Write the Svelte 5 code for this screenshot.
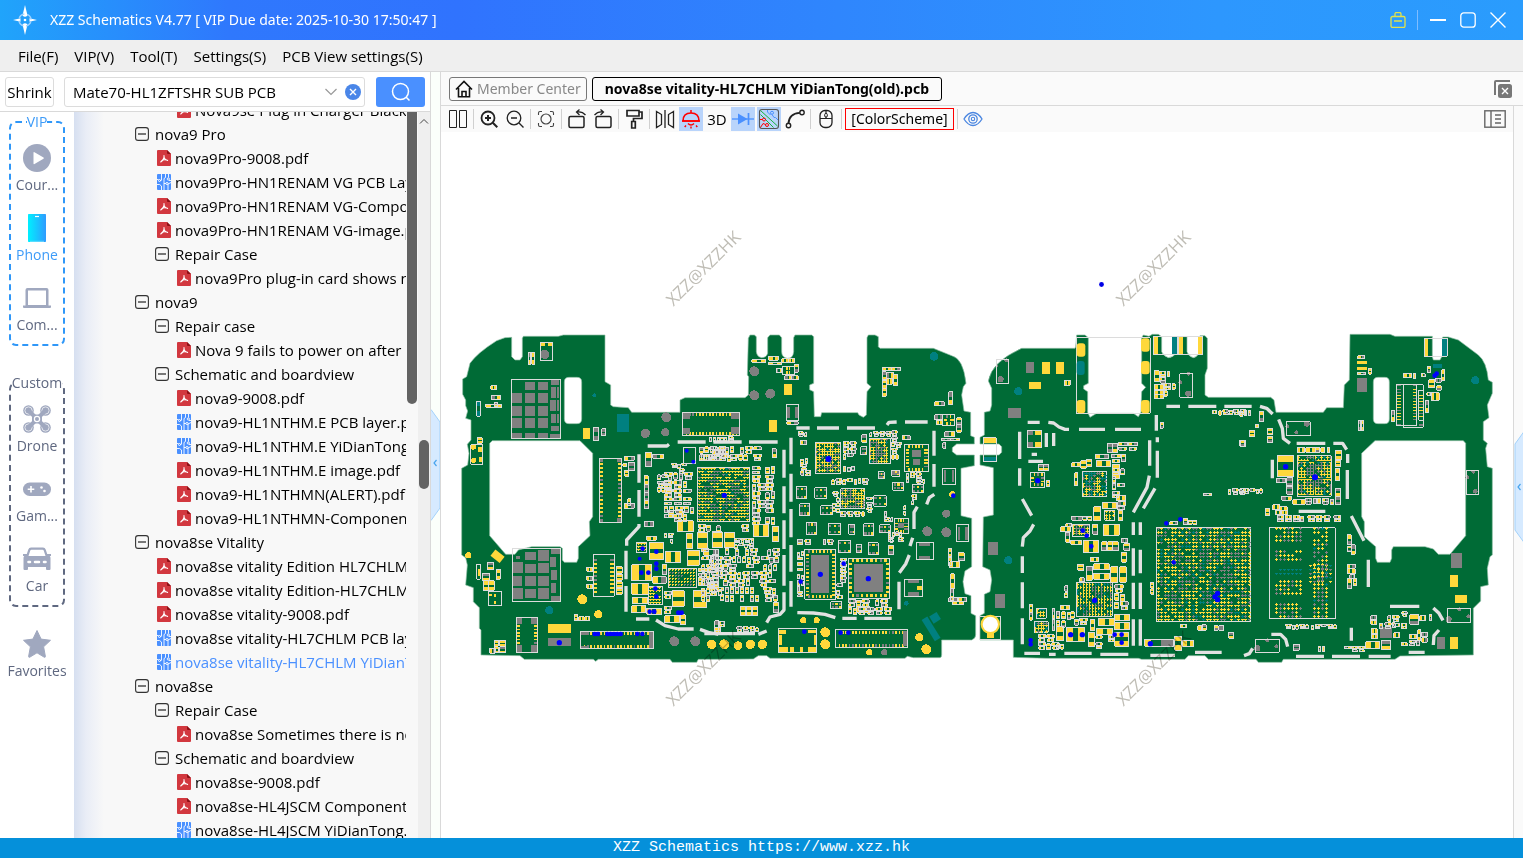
<script>
  const menus = ['File(F)', 'VIP(V)', 'Tool(T)', 'Settings(S)', 'PCB View settings(S)'];

  const railGroups = [
    { title: 'VIP', tone: 'vip', items: [['play', 'Cour...'], ['phone', 'Phone'], ['laptop', 'Com...']] },
    { title: 'Custom', tone: 'custom', items: [['drone', 'Drone'], ['game', 'Gam...'], ['car', 'Car']] }
  ];

  // [depth, kind, label]
  const rows = [
    [2, 'pdf', 'Nova9se Plug in Charger Black Screen'],
    [0, 'dir', 'nova9 Pro'],
    [1, 'pdf', 'nova9Pro-9008.pdf'],
    [1, 'pcb', 'nova9Pro-HN1RENAM VG PCB Layer.pcb'],
    [1, 'pdf', 'nova9Pro-HN1RENAM VG-Component.pdf'],
    [1, 'pdf', 'nova9Pro-HN1RENAM VG-image.pdf'],
    [1, 'dir', 'Repair Case'],
    [2, 'pdf', 'nova9Pro plug-in card shows no service'],
    [0, 'dir', 'nova9'],
    [1, 'dir', 'Repair case'],
    [2, 'pdf', 'Nova 9 fails to power on after hit'],
    [1, 'dir', 'Schematic and boardview'],
    [2, 'pdf', 'nova9-9008.pdf'],
    [2, 'pcb', 'nova9-HL1NTHM.E PCB layer.pcb'],
    [2, 'pcb', 'nova9-HL1NTHM.E YiDianTong.pcb'],
    [2, 'pdf', 'nova9-HL1NTHM.E image.pdf'],
    [2, 'pdf', 'nova9-HL1NTHMN(ALERT).pdf'],
    [2, 'pdf', 'nova9-HL1NTHMN-Component.pdf'],
    [0, 'dir', 'nova8se Vitality'],
    [1, 'pdf', 'nova8se vitality Edition HL7CHLM (old)'],
    [1, 'pdf', 'nova8se vitality Edition-HL7CHLM-image'],
    [1, 'pdf', 'nova8se vitality-9008.pdf'],
    [1, 'pcb', 'nova8se vitality-HL7CHLM PCB layer.pcb'],
    [1, 'pcb', 'nova8se vitality-HL7CHLM YiDianTong(old).pcb', true],
    [0, 'dir', 'nova8se'],
    [1, 'dir', 'Repair Case'],
    [2, 'pdf', 'nova8se Sometimes there is no'],
    [1, 'dir', 'Schematic and boardview'],
    [2, 'pdf', 'nova8se-9008.pdf'],
    [2, 'pdf', 'nova8se-HL4JSCM Component'],
    [2, 'pcb', 'nova8se-HL4JSCM YiDianTong.pcb']
  ];

  const tools = [
    ['columns', 'Split view'], null, ['zoomin', 'Zoom in'], ['zoomout', 'Zoom out'], null, ['fit', 'Fit'], null,
    ['rotl', 'Rotate left'], ['rotr', 'Rotate right'], null, ['roller', 'Paint'], null, ['mirror', 'Mirror'],
    ['lamp', 'Light', true], ['3d', '3D'], ['diode', 'Diode', true], ['net', 'Nets', true], ['curve', 'Curve'], null,
    ['mouse', 'Mouse'], null
  ];

  // ---- board drawing, in thirds of a pixel ----
  let seed = 7;
  const rnd = () => ((seed = (seed * 1103515245 + 12345) % 2147483648) / 2147483648);
  const P = { y: '', g: '', t: '', w: '', b: '', sy: '', sg: '', st: '', wall: '' };
  const nums = (s) => s.trim().split(/\s*;\s*/).filter(Boolean).map((r) => r.trim().split(/\s+/).map(Number));
  const rect = (c, x, y, w, h) => { P[c] += `M${x} ${y}h${w}v${h}h${-w}z`; };
  const disc = (c, x, y, r) => { P[c] += `M${x - r} ${y}a${r} ${r} 0 1 0 ${2 * r} 0a${r} ${r} 0 1 0 ${-2 * r} 0z`; };
  function chip(x, y, w, h, big) {
    rect('w', x, y, w, h);
    const a = rnd() < 0.3 && !big ? 'g' : 'y';
    const b = rnd() < 0.35 && !big ? 'g' : 'y';
    if (w > h) {
      const p = Math.round(w * 0.34);
      rect(a, x + 1, y + 1, p, h - 2); rect(b, x + w - 1 - p, y + 1, p, h - 2);
    } else {
      const p = Math.round(h * 0.34);
      rect(a, x + 1, y + 1, w - 2, p); rect(b, x + 1, y + h - 1 - p, w - 2, p);
    }
  }
  function clutter(x, y, w, h, keep = 0.8, s = 1) {
    for (let cy = y; cy + 12 * s <= y + h; cy += 23 * s) {
      let cx = x;
      while (cx + 10 * s <= x + w) {
        const wide = rnd() < 0.5;
        const cw = wide ? 24 * s : 13 * s;
        if (rnd() < keep && cx + cw <= x + w + 4) {
          if (wide) { chip(cx, cy, 22 * s, 9 * s); if (rnd() < 0.8) chip(cx + 2, cy + 12 * s, 18 * s, 8 * s); }
          else chip(cx, cy + Math.floor(rnd() * 4), 10 * s, 18 * s);
        }
        cx += cw + 2;
      }
    }
  }
  // Ball grid: power and ground balls sit in loose patches
  function bga(x, y, w, h, step, pg, pt, frame = true) {
    if (frame) rect('w', x, y, w, h);
    for (let j = y + 5; j < y + h - 2; j += step)
      for (let i = x + 5; i < x + w - 2; i += step) {
        if (rnd() > 0.9) continue;
        const patch = 1 + 0.9 * Math.sin(i * 0.06 + 1) * Math.cos(j * 0.05);
        const edge = Math.min(i - x, x + w - i, j - y, y + h - j) < w * 0.22;
        const r = rnd();
        const g = Math.min(0.9, pg * patch * (edge ? 0.8 : 1.7));
        const t = pt * (edge ? 1.5 : 0.8);
        P[r < g ? 'sg' : r < g + t ? 'st' : 'sy'] += `M${i - 4} ${j}h8M${i} ${j - 4}v8`;
      }
  }
  function pads(x, y, w, h, step, sides = 'tblr') {
    rect('w', x, y, w, h);
    if (/[tb]/.test(sides)) for (let i = x + 10; i < x + w - 10; i += step) {
      if (sides.includes('t')) rect(rnd() < 0.15 ? 'g' : 'y', i, y + 3, step / 2, 9);
      if (sides.includes('b')) rect(rnd() < 0.15 ? 'g' : 'y', i, y + h - 12, step / 2, 9);
    }
    if (/[lr]/.test(sides)) for (let j = y + 14; j < y + h - 12; j += step) {
      if (sides.includes('l')) rect(rnd() < 0.2 ? 'g' : 'y', x + 2, j, 10, step / 2);
      if (sides.includes('r')) rect(rnd() < 0.2 ? 'g' : 'y', x + w - 12, j, 10, step / 2);
    }
  }

  const sections = [
    {
      o: 0,
      y: '384 309 22 33;279 897 69 26;258 53 11 9;280 53 11 9;68 366 14 15;72 396 8 15;68 732 7 20;102 806 8 8;118 806 6 10;118 828 6 10',
      g: '210 170 30 25;248 170 30 25;288 163 25 17;171 204 30 30;210 204 30 30;248 204 30 30;171 243 30 30;210 243 30 30;248 243 30 30;171 280 30 30;210 280 30 30;248 280 30 30;168 324 33 16;210 324 30 16;248 324 30 16;286 326 30 14;288 186 15 33;305 186 8 33;286 224 17 34;305 224 8 34;288 267 15 28;305 267 8 28;288 303 25 15;172 711 32 34;210 681 32 24;248 675 34 34;210 716 32 28;248 714 34 30;174 754 28 28;210 754 32 28;248 754 34 28;172 789 32 33;210 792 32 28;248 789 34 33;184 694 10 8;288 672 28 15;285 695 18 30;288 735 18 30;288 773 15 30;288 812 28 17;279 939 69 24;682 262 24 20;682 308 24 20;184 877 17 20;229 877 17 20;184 961 17 20;229 961 17 20;433 400 11 11;486 400 12 12;433 581 11 11;486 580 12 12;378 921 24 8;378 962 24 8;582 922 13 46',
      t: '487 267 35 54;67 229 9 15;67 258 9 15',
      box: '257 52 36 55;170 163 147 178;66 229 10 45;48 360 35 58;173 670 143 160;100 800 40 42;66 718 10 45;685 367 38 48',
      dy: '382 823 15;430 868 12;40 691 9;770 958 14;55 366 8;56 406 8',
      dg: '571 325 14;634 277 15;631 322 12;269 88 14;658 949 15;721 949 15',
      dt: '283 856 12;418 211 6',
      db: '695 377 6;715 410 6;563 671 7;554 701 6;604 680 7;604 716 7;604 731 7;559 743 7;580 743 7;601 791 7;604 815 7;584 860 7;598 860 7;670 863 7;680 863 7;419 927 7;429 927 7;457 927 7;467 927 7;477 927 7;487 927 7;497 927 7;547 927 7;562 927 7;313 953 8',
      pads: [[433, 400, 67, 193, 12, 'lr'], [415, 688, 63, 126, 12, 'lr'], [184, 877, 64, 106, 10, 'lr'], [376, 919, 220, 52, 10, 'tb'], [682, 262, 172, 70, 10, 'tb']],
      bga: [[728, 427, 156, 163, 9, 0.25, 0.05], [640, 730, 85, 57, 9, 0.3, 0], [545, 652, 30, 32, 9, 0, 0.1], [582, 784, 42, 56, 9, 0, 0]],
      big: '667 588 48 32;727 622 30 48;772 620 30 48;583 653 43 50;632 679 44 35;697 676 36 45;530 720 60 47;530 775 50 33;532 817 45 20;530 843 42 20;575 850 45 18;652 798 36 46;715 798 40 50',
      chips: '108 182 17 11;109 211 28 12;92 238 48 9;120 232 9 14;220 82 8 36;230 82 9 36;67 338 15 17;571 382 18 43;594 388 32 12;508 394 30 12;522 412 16 26;504 416 12 8;510 436 12 18;415 308 16 38;440 312 12 20;568 452 12 26;568 478 12 26;568 504 12 24;568 528 12 24;508 535 30 15;518 522 10 20;568 590 28 14;694 626 20 44;746 673 44 18;640 557 45 20;630 873 44 20;677 870 14 30;395 727 18 12;395 754 18 12;395 778 18 12;484 725 18 20;484 748 18 18;484 770 18 18;484 790 18 18;124 733 12 30;98 712 18 22;83 745 20 22;85 768 16 28;102 768 16 28;358 868 10 18;372 875 16 12;390 875 14 12;105 970 16 15;118 946 12 18;118 966 12 18;134 946 18 18;134 966 18 18;780 888 12 34;594 755 40 20;622 720 14 30;770 690 20 40;576 634 28 12',
      clutter: [[608, 450, 45, 60, 0.9, 0.8], [628, 442, 95, 140, 0.9, 1.1], [650, 415, 45, 30, 0.8, 0.7], [735, 365, 100, 55, 0.9], [730, 730, 80, 55, 0.9, 1.2], [628, 625, 30, 25, 0.8, 0.7], [764, 335, 80, 12, 1, 0.7], [730, 600, 80, 20, 0.8], [765, 700, 45, 120, 0.8], [628, 800, 20, 60, 0.8]],
      walls: '578 363 636 363 642 358;668 351 752 351;552 388 552 473;552 495 552 575;552 597 552 605 515 645 515 662;513 677 513 763;513 783 513 860;543 882 583 882;603 885 630 902 670 912 716 912;735 913 760 922 790 928'
    },
    {
      o: 780,
      y: '207 178 24 32;162 286 24 34;192 914 20 12;280 914 22 10;192 966 26 15;278 966 26 15;192 930 8 30;296 930 8 30;607 782 14 12;226 966 12 14;255 966 8 14',
      g: '288 690 54 113;417 717 87 84;592 375 26 22;594 402 21 18;48 263 26 20;48 306 26 22;217 245 8 34;240 245 8 34;686 436 8 34;710 436 8 34;728 605 8 40;751 605 8 40;612 654 34 10;612 692 34 10;580 765 32 8;580 802 32 10;549 594 18 14;564 919 12 45',
      t: '',
      box: '214 238 36 50;190 912 115 70;683 430 38 50;724 600 37 50;604 652 52 52;568 763 55 52',
      dy: '331 922 15;331 958 15;28 958 15;69 962 13;106 958 14;142 958 14;613 937 12;634 973 15;463 982 9;265 886 9;305 886 9;712 508 9',
      dg: '118 139 15;118 211 15;166 206 15;694 566 12;637 619 15;694 622 15;508 982 9',
      dt: '657 94 13;574 835 7',
      db: '28 511 8;340 402 9;316 748 8;460 761 8;386 716 7;257 770 7;715 512 7;268 920 7;377 923 7;400 923 7',
      pads: [[270, 673, 92, 150, 11, 'tblr'], [400, 700, 124, 120, 14, 'tblr'], [361, 915, 217, 53, 10, 'tb'], [570, 358, 70, 82, 10, 'tblr'], [538, 580, 42, 46, 8, 'tblr'], [684, 268, 34, 34, 10, 'tblr'], [204, 124, 34, 26, 8, 'tb']],
      bga: [[301, 352, 76, 94, 8, 0.25, 0.03], [463, 340, 63, 76, 8, 0.35, 0.04], [378, 492, 72, 60, 8, 0.4, 0]],
      big: '116 600 46 36;30 622 30 46;-8 622 30 46;-8 378 30 16;172 604 18 46;76 844 16 28;94 844 16 28;112 844 16 28;424 846 42 18',
      chips: '162 94 28 12;110 105 42 7;160 112 40 7;184 130 16 12;200 102 20 10;220 102 20 10;210 152 20 12;230 152 20 12;240 118 10 24;216 290 34 8;660 230 28 12;702 200 11 40;690 320 30 16;680 340 26 7;708 340 26 7;726 278 13 22;726 300 13 22;660 270 22 14;664 286 20 14;684 354 8 16;502 128 28 10;530 128 28 10;502 140 12 24;502 166 12 24;502 190 12 24;514 142 22 18;514 162 18 16;536 150 12 32;708 746 10 46;706 792 10 34;702 818 26 12;730 818 26 12;712 830 34 10;700 672 10 24;700 698 10 24;730 684 18 24;704 710 30 18;520 662 16 26;175 832 16 30;172 372 12 26;440 330 16 22;256 346 18 14;562 333 24 12',
      ics: '244 486 32 36;300 488 36 32;254 536 30 36;318 542 36 28;340 596 38 32;276 592 28 38;446 596 30 36;476 512 38 32;370 648 38 36;460 654 30 36;402 598 18 30;494 600 32 24;348 830 32 22;534 472 32 24;592 480 34 24;490 440 18 22;424 660 16 24;438 366 18 24;530 436 24 18',
      clutter: [[-40, 365, 200, 52, 0.9], [112, 425, 40, 165, 0.95, 1.1], [152, 425, 38, 165, 0.85, 1.1], [-40, 672, 235, 155, 0.85], [60, 640, 70, 40, 0.8, 0.7], [80, 600, 30, 30, 0.9], [385, 350, 42, 95, 0.9, 0.8], [530, 318, 26, 112, 0.9, 0.75], [464, 320, 62, 18, 1, 0.7], [350, 462, 110, 26, 0.8, 0.8], [376, 560, 76, 26, 0.9, 0.8], [354, 500, 22, 60, 0.9, 0.7], [270, 644, 95, 26, 0.9, 0.8], [247, 645, 20, 175, 0.95, 0.75], [376, 700, 18, 70, 0.9, 0.8], [258, 400, 32, 60, 0.7, 0.8], [400, 825, 140, 45, 0.7], [456, 500, 20, 60, 0.7, 0.7], [508, 560, 28, 90, 0.7, 0.7], [566, 540, 18, 40, 0.7, 0.7], [520, 620, 55, 30, 0.6, 0.7], [0, 890, 50, 28, 0.7, 0.8], [66, 906, 75, 12, 1, 0.7], [574, 444, 60, 34, 0.7, 0.7], [590, 510, 20, 30, 0.7, 0.7], [366, 776, 20, 50, 0.8, 0.8], [250, 320, 30, 30, 0.6, 0.7]],
      walls: '-5 351 80 351;102 351 188 351;207 374 207 458;207 484 207 565;207 586 207 672;207 690 207 782;207 802 207 855 195 868 165 876 155 893;228 338 228 418;228 446 228 530;228 552 228 637;228 660 228 740;228 768 228 845;244 309 284 309;306 309 372 309;396 309 480 309;516 300 522 292 545 291;570 291 638 291;657 317 657 392;657 417 657 485;658 508 643 518 635 538;607 545 597 562 597 612;593 638 585 663;583 690 572 717 553 743;552 770 552 853;247 863 295 864 330 868 361 878;382 880 425 880;448 880 530 880;-32 926 120 926;130 928 155 918'
    },
    {
      o: 1560,
      y: '201 111 24 35;243 111 24 35;162 171 36 20;25 339 39 14;535 35 14 54;612 35 12 54;669 35 14 54;511 945 18 18;180 316 18 15;180 352 18 14;36 915 21 24',
      g: '153 111 24 33;99 249 39 30;38 651 31 38;60 807 30 42;156 316 18 15;156 352 18 14;558 943 36 20',
      t: '25 395 39 15;591 35 14 54',
      box: '304 38 222 227;64 103 37 73;614 146 39 71;535 35 73 53;610 35 73 53;25 339 39 71;15 874 62 69;158 316 42 52;509 943 87 21',
      dy: '',
      dg: '77 163 9;640 206 9;616 172 6;640 146 6;94 106 6;66 124 4',
      dt: '130 199 12;100 706 12',
      db: '188 467 8;323 617 7;335 632 7;349 664 7;359 826 8;287 929 8;322 929 8;419 929 7;440 929 7;440 953 7;167 946 7;167 958 7;526 956 8;574 595 7;616 583 7;596 712 7;720 815 8;728 805 8;728 824 8',
      pads: [[166, 442, 43, 45, 11, 'tblr']],
      bga: [[322, 440, 73, 74, 8, 0.15, 0.3], [304, 774, 108, 100, 9, 0.25, 0.12], [390, 556, 30, 30, 10, 0, 0], [292, 598, 52, 36, 8, 0.25, 0], [545, 607, 282, 283, 10.5, 0.27, 0.12], [184, 850, 30, 30, 8, 0, 0.2], [178, 890, 42, 32, 8, 0.1, 0.2]],
      big: '364 408 44 18;382 532 44 18;385 598 48 33;325 646 46 36;357 717 46 18;357 745 46 18;408 726 20 46;434 726 20 46;372 880 46 22;366 910 46 20;420 868 44 18;420 894 44 20;274 907 56 43;340 922 20 44;420 922 42 42;412 418 22 42;357 546 20 42;538 138 15 32;538 180 28 14;538 196 28 14;538 210 28 12;246 906 20 42',
      chips: '190 420 16 16;206 420 16 16;268 166 18 15;556 292 9 18;214 468 10 16;300 444 9 38;290 414 26 12;318 408 16 22;334 404 16 22;362 388 38 14;424 512 28 16;428 530 24 12;428 544 20 10;430 556 14 30;290 574 32 12;324 574 12 12;338 574 12 12;272 596 18 10;258 606 28 14;272 622 12 30;288 646 32 12;354 598 14 30;380 650 16 28;398 650 16 28;414 650 16 28;440 640 18 14;446 656 18 20;440 682 14 30;346 697 26 12;308 718 18 18;334 724 18 42;314 758 14 12;256 842 28 12;232 850 8 32;232 884 8 32;164 838 8 24;164 862 8 24;288 860 10 20;346 884 14 34;528 772 9 18;528 792 9 16;686 505 24 7;584 590 24 10;626 580 12 20;640 586 12 12;654 586 12 12;600 934 20 42;624 946 32 20;618 898 18 10;668 902 12 14;682 900 12 16;718 902 12 14;732 902 14 14;762 922 14 18;796 346 14 18;712 256 14 10;398 355 14 28;414 355 14 28',
      clutter: [[430, 352, 65, 32, 0.9, 1.2], [410, 388, 70, 34, 0.9, 1.2], [412, 430, 50, 85, 0.9], [270, 780, 30, 50, 0.9, 0.9], [420, 780, 42, 85, 0.85, 1.1], [244, 860, 60, 40, 0.8, 1.1], [164, 930, 90, 40, 0.9], [362, 932, 55, 38, 0.8, 0.9], [555, 140, 45, 28, 0.8, 0.8], [568, 176, 34, 52, 0.9, 0.9], [732, 255, 80, 20, 1, 0.75], [760, 492, 50, 20, 0.9, 0.8], [300, 880, 50, 16, 0.8], [245, 955, 50, 14, 0.8, 0.8]],
      walls: '574 244 615 244;640 244 724 244;748 244 830 244;158 292 194 292;220 292 236 294 252 306 270 313 282 313;312 313 390 313;420 313 498 313;134 320 134 402;134 430 134 482;214 324 214 366;236 324 236 363;170 388 186 388;160 409 204 409;544 270 544 317;547 337 547 352;547 377 547 458;524 346 524 422;523 452 516 487 475 562;540 490 505 550;475 592 475 630;496 592 496 630;475 670 475 752;496 674 496 745;475 773 475 852;496 773 496 852;475 883 475 962;496 883 496 962;142 522 170 572;176 598 165 618 145 638 142 665;142 694 142 744;142 772 142 850;142 880 142 958;148 985 195 985;222 988 242 988;268 985 350 985;376 988 460 988;526 991 600 991;660 982 740 982'
    },
    {
      o: 2355,
      y: '553 40 12 54;630 750 24 36;645 810 36 23;630 936 24 35;112 391 48 20;112 436 48 20;352 107 30 11;352 125 30 11',
      g: '351 159 30 42;633 684 33 45;591 936 24 35;421 907 36 33;470 176 12 7;518 176 12 7;470 296 12 7;538 296 12 7',
      t: '607 40 14 54;580 118 27 11',
      box: '553 40 69 54;139 290 72 42;680 436 36 73;622 850 70 42;46 943 72 39;88 609 198 272;112 391 48 64;490 180 60 127',
      dy: '',
      dg: '200 296 9;142 304 6;169 322 6;700 440 6;706 499 7;682 457 6;658 853 6;626 883 9;685 874 6;52 970 9;82 946 6;109 964 6',
      dt: '706 166 12',
      db: '137 425 8;225 457 9;584 152 7;590 146 7',
      pads: [[470, 178, 60, 124, 9, 'lr'], [536, 196, 14, 90, 9, 'l']],
      bga: [[172, 392, 102, 122, 8.5, 0.3, 0.08], [104, 606, 80, 46, 12, 0.3, 0, false], [104, 674, 80, 42, 12, 0.4, 0, false], [104, 730, 80, 24, 12, 0, 0.95, false], [104, 764, 80, 46, 12, 0.3, 0, false], [104, 834, 80, 48, 12, 0.3, 0, false], [218, 606, 50, 275, 12, 0.33, 0.12, false], [206, 718, 70, 60, 12, 0.2, 0.2, false]],
      big: '378 951 42 20;158 524 38 14;508 928 22 14;172 369 22 13;198 369 30 13',
      chips: '354 92 20 10;354 142 22 8;386 130 8 18;355 287 8 30;364 287 8 30;490 146 26 12;520 146 8 14;544 146 12 10;564 124 9 20;566 164 18 24;588 160 16 12;590 182 14 14;574 204 24 22;560 203 12 8;556 228 10 34;605 134 10 34;456 256 9 34;58 260 13 30;82 312 16 18;82 334 16 18;30 316 14 20;48 298 8 10;0 346 18 18;286 376 18 28;286 406 16 20;286 430 14 36;286 490 16 24;286 516 16 24;228 368 12 14;242 368 12 14;262 368 8 14;110 460 28 14;140 458 18 24;140 484 18 24;126 514 28 12;76 552 14 20;98 540 22 14;118 546 24 10;106 558 16 12;124 558 20 12;322 630 12 28;334 660 12 28;322 664 12 16;322 718 24 12;322 732 24 14;330 750 14 10;322 762 14 28;342 762 8 20;510 870 26 28;540 872 18 16;568 868 8 18;160 958 18 18;392 872 18 12;392 886 18 12;394 912 18 14;394 928 18 14;426 946 26 28;462 924 18 14;484 954 18 8;534 914 9 34;546 922 16 14;546 938 16 14',
      clutter: [[196, 520, 90, 24, 0.95, 0.9], [112, 572, 85, 20, 1, 0.9], [204, 572, 74, 20, 1, 0.9], [282, 572, 28, 20, 1, 0.9], [138, 898, 70, 18, 1, 0.7], [214, 898, 85, 18, 1, 0.7], [0, 256, 52, 18, 1, 0.8], [0, 492, 70, 18, 1, 0.7], [222, 964, 155, 20, 0.75, 0.8], [420, 872, 65, 36, 0.9, 0.9], [462, 896, 42, 24, 0.9, 0.8], [486, 860, 24, 18, 0.9, 0.7], [508, 946, 30, 18, 0.9, 0.8]],
      walls: '-5 244 32 244;60 244 80 250 98 267;116 283 127 310 130 340 150 355;170 355 256 355;280 355 308 355 320 374;323 387 323 414;322 435 322 522;97 404 97 460;176 559 256 559;334 573 372 647;385 704 385 786;334 908 334 947;450 844 538 844;580 849 597 865 609 886;597 915 582 932 580 960;94 928 122 928 137 943 143 965;12 992 28 986 38 970;168 994 252 994;276 994 360 994;386 994 452 994;506 982 554 982'
    }
  ];

  for (const s of sections) {
    for (const c of ['y', 'g', 't']) for (const [x, y, w, h] of nums(s[c])) rect(c, x + s.o, y, w, h);
    for (const [x, y, w, h] of nums(s.box)) rect('w', x + s.o, y, w, h);
    for (const [k, c] of [['dy', 'y'], ['dg', 'g'], ['dt', 't'], ['db', 'b']]) for (const [x, y, r] of nums(s[k])) disc(c, x + s.o, y, r);
    for (const [x, ...r] of s.pads) pads(x + s.o, ...r);
    for (const [x, ...r] of s.bga) bga(x + s.o, ...r);
    for (const [x, y, w, h] of nums(s.big)) chip(x + s.o, y, w, h, true);
    for (const [x, y, w, h] of nums(s.chips)) chip(x + s.o, y, w, h);
    for (const [x, y, w, h] of nums(s.ics || '')) {
      // small ICs: six legs round a body
      rect('w', x + s.o, y, w, h);
      for (let k = 0; k < 3; k++) {
        const px = x + s.o + 2 + (k * (w - 10)) / 2;
        rect(k === 1 ? 'y' : 'g', px, y + 3, 7, 7);
        rect(k === 2 ? 'y' : 'g', px, y + h - 10, 7, 7);
      }
    }
    for (const [x, ...r] of s.clutter) clutter(x + s.o, ...r);
    for (const l of nums(s.walls)) {
      P.wall += 'M' + l.map((v, i) => (i % 2 ? v : v + s.o)).join(' ');
    }
  }

  const boardLeft =
    'M170 37L150 38 125 47Q65 85 45 115L35 155 23 162V208L32 225V242L38 258 32 280 48 285V345L37 358 42 385 38 420 20 430V690L32 698 37 720 32 780 55 788V830L73 848V910L78 915V990L195 992 208 1003H415L422 1009 430 1003H645L652 1012H725L730 1003H780L895 1002 910 992H935L945 1000H1350L1357 994 1375 998H1455Q1460 998 1460 990V945H1550Q1562 940 1562 930V872L1548 865V812L1530 806 1524 770 1530 738 1550 725V580L1518 572V430L1558 422V390H1505L1492 380V368L1505 357H1558V337L1547 332V262L1527 258 1520 210 1525 185 1533 175Q1525 100 1490 92L1435 70H1275L1270 65V35L1260 30H1240L1236 38V175L1248 185 1236 200 1234 270 1225 277 1212 270 1208 263H1100L1097 275H1078L1076 200 1064 194V180L1076 175V35L1070 30H1020L1016 38V80Q1014 100 998 100 980 98 980 80V38L973 30H945L938 38V85Q934 98 920 98 906 96 904 80V35L898 30H885L880 40 877 150 881 155 880 210 870 218H690L675 225V262H530L520 248 475 245 467 240V180L450 170V30H325L310 34H205L202 40V95L195 105H180L170 95Z' +
    'M342 157H366Q380 157 380 171V282Q380 296 366 296H342Q328 296 328 282V171Q328 157 342 157Z' +
    'M112 347H375L413 385V575L403 590 405 632 370 665V700L365 712H328L322 705V670L315 665H230L190 675 180 688H152L104 632V355Z';
  const boardRight =
    'M1860 70H1700Q1610 110 1600 168L1610 190V240L1605 258 1588 262V330L1575 337V357H1632L1640 365V382L1632 390H1575V420L1615 428V570L1585 576 1583 725 1605 735 1610 765 1605 800 1588 808V865L1575 872V945H1675V997L1775 1000H2050L2060 1003H2190L2200 992H2250L2260 1003H2403L2410 1012H2480L2485 1003H2820L2835 993 3055 990V850L3077 828V785L3100 780 3097 730 3105 695 3112 690V430L3097 425 3092 370 3097 355 3085 345V290L3102 278 3097 240 3112 205V172L3100 165Q3095 110 3070 90L3010 45 2980 36H2963V90L2955 105H2935L2932 95V34H2820L2805 28H2685L2683 165 2668 180 2665 248H2615L2605 262H2463L2457 225 2447 217H2260L2250 210V150L2257 130V40L2250 32H2235V80Q2225 98 2215 98 2200 94 2196 80V35H2167V80Q2155 98 2140 98 2124 92 2120 80V35L2110 28H2092L2082 34 2065 30 2060 38V175L2072 187 2060 200 2058 262 2050 275 2035 265H1925L1905 277 1898 262V200L1886 192V182L1900 175V38L1890 30H1865L1862 65Z' +
    'M2769 157H2790Q2803 157 2803 171V282Q2803 296 2790 296H2769Q2755 296 2755 282V171Q2755 157 2769 157Z' +
    'M2760 347H3025L3032 355V632L2985 688H2950L2935 672 2910 665H2815L2810 675V700L2805 712H2767L2762 700V665L2728 635V590L2720 575V385Z';
  const padsUsb = [[305, 55], [305, 225], [498, 40], [498, 108], [498, 225]];
  const watermarks = [[703, 268], [1153, 268], [703, 668], [1153, 668]];
</script>

{#snippet fileIcon(kind)}
  {#if kind === 'dir'}
    <svg width="14" height="14" viewBox="0 0 14 14"><rect x=".6" y=".6" width="12.8" height="12.8" rx="2.5" fill="none" stroke="#333" stroke-width="1.1" /><path d="M3 7h8" stroke="#222" stroke-width="1.2" /></svg>
  {:else if kind === 'pdf'}
    <svg width="14" height="16" viewBox="0 0 14 16"><path d="M1 0h9l4 4v11q0 1-1 1H1q-1 0-1-1V1q0-1 1-1z" fill="#d2383f" /><path d="M10 0l4 4h-3q-1 0-1-1z" fill="#8d1016" /><path d="M7 5.500c.6 3-1.300 5-3.300 6.500M7 5.500c-.2 3 1.500 4.500 3.600 5M4.500 11c1.500-1.300 3.500-1.500 6-.8" fill="none" stroke="#fff" stroke-width="1.100" stroke-linecap="round" /></svg>
  {:else}
    <svg width="14" height="16" viewBox="0 0 14 16"><rect width="14" height="16" rx="1" fill="#4a90ff" /><g fill="none" stroke="#fff" stroke-width=".9"><path d="M4.500 0v6M4.500 6.500H3M0 5.500h1.500M8.500 0v3.500l-1.500 1V16M7 9.500h2M11.500 3.500V0M14 6.500h-2M4.500 16v-4L2.500 10.500H0M11 10v6M11 10l3-1.500" /><circle cx="2.500" cy="6.500" r="1" /><circle cx="10" cy="9.500" r="1.100" /><circle cx="11.300" cy="5" r="1.100" /></g></svg>
  {/if}
{/snippet}

{#snippet railIcon(kind)}
  <svg width="28" height="28" viewBox="0 0 28 28" fill="#a0a8bf">
    {#if kind === 'play'}
      <circle cx="14" cy="14" r="14" /><path d="M10.500 8.500v11q0 1 1 .6l9-5.300q.8-.6 0-1.200l-9-5.400q-1-.5-1 .3z" fill="#fff" />
    {:else if kind === 'phone'}
      <defs><linearGradient id="ph" x1="0" x2="1"><stop offset="0" stop-color="#00f0ff" /><stop offset="1" stop-color="#2f9bff" /></linearGradient></defs>
      <rect x="5" y="-1" width="18" height="30" rx="2.500" fill="url(#ph)" /><path d="M12 2.500h4" stroke="#fff" stroke-width="1.200" /><path d="M7 27.300h14" stroke="#7fe2ff" stroke-width=".8" />
    {:else if kind === 'laptop'}
      <path d="M4.500 4h19q2 0 2 2v16h-23V6q0-2 2-2zM5 6.500V21h18V6.500z" fill-rule="evenodd" /><path d="M0 21.500h28v1.500q0 1-1 1H1q-1 0-1-1z" />
    {:else if kind === 'drone'}
      <circle cx="5.500" cy="5.500" r="5.300" /><circle cx="22.500" cy="5.500" r="5.300" /><circle cx="5.500" cy="22.500" r="5.300" /><circle cx="22.500" cy="22.500" r="5.300" />
      <g fill="none" stroke="#fff" stroke-width=".7"><circle cx="5.500" cy="5.500" r="3.600" /><circle cx="22.500" cy="5.500" r="3.600" /><circle cx="5.500" cy="22.500" r="3.600" /><circle cx="22.500" cy="22.500" r="3.600" /></g>
      <path d="M5.500 5.500L12 12h4l6.500-6.500M5.500 22.500L12 16h4l6.500 6.500" fill="none" stroke="#a0a8bf" stroke-width="4" stroke-linecap="round" /><rect x="9" y="9.500" width="10" height="9" rx="3" /><circle cx="14" cy="14" r="2.600" fill="none" stroke="#fff" stroke-width="1.200" />
    {:else if kind === 'game'}
      <rect x="0" y="7.500" width="28" height="13.500" rx="6.700" /><path d="M8 11v6.500M4.700 14.200h6.600" stroke="#fff" stroke-width="1.600" /><circle cx="18.500" cy="12.500" r="1.300" fill="#fff" /><circle cx="21.500" cy="16" r="1.300" fill="#fff" />
    {:else if kind === 'car'}
      <path d="M8 2.500h12q2 0 2.700 2l1.500 4.500H28v2h-1.200q.7.800.7 2V24q0 1-1 1h-2.500q-1 0-1-1v-2H5v2q0 1-1 1H1.500q-1 0-1-1V13q0-1.200.7-2H0V9h3.800l1.500-4.500q.7-2 2.700-2zM8.500 4.800q-1 0-1.300 1L5.500 11h17l-1.700-5.200q-.3-1-1.300-1z" fill-rule="evenodd" /><path d="M5.500 17h1.500M12 17h4M21 17h1.500" stroke="#fff" stroke-width="2.600" stroke-linecap="round" />
    {:else}
      <path d="M14 0.500l4.100 8.600 9.400 1.200-6.900 6.500 1.800 9.700q0 1-1 .8L14 22.800l-7.400 4.500q-1 .2-1-.8l1.800-9.700L.5 10.300l9.400-1.200z" stroke="#a0a8bf" stroke-linejoin="round" />
    {/if}
  </svg>
{/snippet}

{#snippet toolIcon(kind)}
  <svg width="24" height="24" viewBox="0 0 24 24" fill="none" stroke="#222" stroke-width="1.500">
    {#if kind === 'columns'}
      <path d="M3.500 3.500h7v17h-7zM13.500 3.500h7v17h-7z" stroke-width="1" />
    {:else if kind === 'zoomin'}
      <circle cx="11" cy="11" r="6.500" stroke-width="1.800" /><path d="M15.800 15.800l4.500 4.500" stroke-width="2" /><path d="M8 11h6M11 8v6" stroke-width="2" />
    {:else if kind === 'zoomout'}
      <circle cx="11" cy="11" r="6.800" stroke-width="1.300" /><path d="M16 16l4.500 4.500M8 11h6" stroke-width="1.400" />
    {:else if kind === 'fit'}
      <path d="M4.500 8V6q0-1.500 1.500-1.500h2M16 4.500h2q1.500 0 1.500 1.500v2M19.500 16v2q0 1.500-1.500 1.500h-2M8 19.500H6q-1.500 0-1.500-1.500v-2" stroke-width="1.100" stroke="#444" /><circle cx="12" cy="12" r="5" stroke-width="1.200" stroke="#444" />
    {:else if kind === 'rotl'}
      <rect x="4" y="9.500" width="15" height="11" rx="1.500" /><path d="M12 5q5-1 8.500 3M14.500 2.500L11.500 5l3 3" stroke-width="1.300" />
    {:else if kind === 'rotr'}
      <rect x="5" y="9.500" width="15" height="11" rx="1.500" /><path d="M3.500 8Q7 4 12 5M9.500 2.500l3 2.500-3 3" stroke-width="1.300" />
    {:else if kind === 'roller'}
      <path d="M5 3.500h12v5.500H5zM17 5h3v6.500h-8.500v3M9.700 14.500h3.600V21H9.700z" stroke-width="1.700" />
    {:else if kind === 'mirror'}
      <path d="M3.500 4.500l5 3v10l-5 3zM20.500 4.500l-5 3v10l5 3zM12 3v18" stroke-width="1.300" />
    {:else if kind === 'lamp'}
      <path d="M4 14Q4 6 12 6t8 8z" stroke="#f00" stroke-width="1.600" /><path d="M12 3v3M9 16.500q3 3 6 0M3 14h18" stroke="#f00" stroke-width="1.500" /><path d="M12 19.500v2M7 18.500l-1.300 1.500M17 18.500l1.300 1.500" stroke="#f00" stroke-width="1.400" />
    {:else if kind === 'diode'}
      <path d="M1 12h22" stroke="#4a90ff" stroke-width="1.300" /><path d="M7 6.500v11l9.500-5.500z" fill="#4a90ff" stroke="none" /><path d="M17.500 6v12" stroke="#4a90ff" stroke-width="1.700" />
    {:else if kind === 'net'}
      <rect x="2.500" y="2.500" width="19" height="19" rx="2.500" stroke="#555" stroke-width="1.100" />
      <path d="M3.500 3.500l17 15.500M3.500 7.500l13 13" stroke="#17b33c" stroke-width="1" /><path d="M10.500 3v2l3 3M15 7.500l2 3h1.500l2.500 2.500" stroke="#4a90ff" stroke-width="1" /><circle cx="15" cy="5.800" r="1.500" stroke="#4a90ff" stroke-width="1" /><path d="M3 12.500h2.500M3.500 20.500l2.500-4 2.500 1" stroke="#f00" stroke-width="1" /><circle cx="7" cy="12.500" r="1.500" stroke="#f00" stroke-width="1" /><circle cx="10" cy="18" r="1.500" stroke="#f00" stroke-width="1" />
    {:else if kind === 'curve'}
      <circle cx="19" cy="5.500" r="2.200" stroke-width="1.400" /><circle cx="5.500" cy="18.500" r="2.200" stroke-width="1.400" /><path d="M5.500 16.300Q6 6.500 16.800 5.800" stroke-width="1.800" />
    {:else if kind === 'mouse'}
      <rect x="6" y="3.500" width="12" height="17" rx="5" stroke-width="1.300" /><path d="M6 11.500h12M12 3.500v3.500M12 9.500v2" stroke-width="1.200" /><rect x="10.700" y="6.500" width="2.600" height="3.500" rx="1" stroke-width="1" />
    {:else}
      <path d="M3 12Q7 5.500 12 5.500T21 12Q17 18.500 12 18.500T3 12z" stroke="#4a86e0" stroke-width="1.300" /><circle cx="12" cy="12" r="4.200" stroke="#4a86e0" stroke-width="1.300" /><circle cx="12" cy="12" r="1.700" stroke="#4a86e0" stroke-width="1.100" />
    {/if}
  </svg>
{/snippet}

<div class="app">
  <header class="title">
    <svg width="30" height="30" viewBox="0 0 30 30"><path d="M15 0l2.500 10.500Q15 13 12.500 10.500zM15 30l-2.500-10.500Q15 17 17.500 19.500zM3 15l7.500-1.800v3.600zM27 15l-7.500-1.800v3.600z" fill="#fff" /><circle cx="15" cy="15" r="6" fill="none" stroke="#9fd2ff" stroke-width="1.500" stroke-dasharray="6.500 2.925" stroke-dashoffset="-1.500" /><circle cx="15" cy="15" r="1.300" fill="#fff" /></svg>
    <h1>XZZ Schematics V4.77 [ VIP Due date: 2025-10-30 17:50:47 ]</h1>
    <div class="winbtns">
      <button aria-label="Toolbox"><svg width="16" height="16" viewBox="0 0 16 16" fill="none" stroke="#e2e24a" stroke-width="1.300"><rect x="1" y="4.500" width="14" height="11" rx="1.500" /><path d="M5 4.500V2q0-1.500 1.500-1.500h3Q11 .5 11 2v2.500M4 9h8" /></svg></button>
      <i></i>
      <button aria-label="Minimize"><svg width="16" height="16"><path d="M0 8h16" stroke="#fff" stroke-width="2" /></svg></button>
      <button aria-label="Maximize"><svg width="16" height="16"><rect x=".8" y=".8" width="14.400" height="14.400" rx="3" fill="none" stroke="#fff" stroke-width="1.300" /></svg></button>
      <button aria-label="Close"><svg width="16" height="16"><path d="M.5.5l15 15M15.500.5l-15 15" stroke="#fff" stroke-width="1.400" /></svg></button>
    </div>
  </header>

  <nav class="menu">
    {#each menus as m}<button>{m}</button>{/each}
  </nav>

  <main>
    <section class="left">
      <form class="search" onsubmit={(e) => e.preventDefault()}>
        <button type="button" class="shrink">Shrink</button>
        <div class="combo">
          <select aria-label="Search model"><option>Mate70-HL1ZFTSHR SUB PCB</option></select>
          <svg class="chev" width="12" height="8" viewBox="0 0 12 8"><path d="M.5 1L6 6.500 11.500 1" fill="none" stroke="#999" stroke-width="1.200" /></svg>
          <button type="button" class="clear" aria-label="Clear"><svg width="16" height="16"><circle cx="8" cy="8" r="8" fill="#4a86e8" /><path d="M5 5l6 6M11 5l-6 6" stroke="#fff" stroke-width="1.400" /></svg></button>
        </div>
        <button class="go" aria-label="Search"><svg width="20" height="20" viewBox="0 0 20 20" fill="none" stroke="#fff" stroke-width="1.500"><circle cx="9.500" cy="9.500" r="8" /><path d="M15 15l3.500 3.500" /></svg></button>
      </form>
      <div class="browse">
        <div class="rail">
          {#each railGroups as g}
            <fieldset class={g.tone}>
              <legend>{g.title}</legend>
              {#each g.items as [icon, label]}
                <button class:on={icon === 'phone'}>{@render railIcon(icon)}<span>{label}</span></button>
              {/each}
            </fieldset>
          {/each}
          <button class="fav">{@render railIcon('star')}<span>Favorites</span></button>
        </div>
        <div class="treewrap">
          <ul>
            {#each rows as [depth, kind, label, active]}
              <li class="d{depth} {kind}" class:active>
                <span class="ic">{@render fileIcon(kind)}</span><span>{label}</span>
              </li>
            {/each}
          </ul>
        </div>
        <div class="inbar"><i></i></div>
        <div class="outbar">
          <svg width="10" height="6" viewBox="0 0 10 6"><path d="M1 5.500l4-4 4 4" fill="none" stroke="#444" /></svg>
          <i></i>
        </div>
      </div>
    </section>

    <div class="split">
      <svg width="10" height="112" viewBox="0 0 10 112"><path d="M0 .5L9 13v86L0 111.500z" fill="#d6eaff" /><path d="M0 .5L9 13v86L0 111.500" fill="none" stroke="#a3d2fb" /><path d="M5.500 51L3 54l2.500 3" fill="none" stroke="#4aa5ee" stroke-width="1.200" /></svg>
    </div>

    <section class="right">
      <div class="tabs">
        <button class="tab"><svg width="18" height="18" viewBox="0 0 18 18" fill="none" stroke="#111" stroke-width="1.600"><path d="M1 9.500L9 1.500l8 8M3.500 8v8.700h11V8M7 16.500v-5h4v5" /></svg>Member Center</button>
        <button class="tab cur">nova8se vitality-HL7CHLM YiDianTong(old).pcb</button>
        <button class="closeall" aria-label="Close all tabs"><svg width="18" height="18" viewBox="0 0 18 18"><path d="M1 15V2q0-1 1-1h14" fill="none" stroke="#777" stroke-width="2" /><rect x="4" y="4" width="14" height="14" rx="2.500" fill="#777" /><path d="M8 8l6 6M14 8l-6 6" stroke="#fff" stroke-width="1.400" /></svg></button>
      </div>
      <div class="work">
        <div class="viewer">
          <div class="tools">
            {#each tools as t}
              {#if t}
                <button class:on={t[2]} aria-label={t[1]}>{#if t[0] === '3d'}3D{:else}{@render toolIcon(t[0])}{/if}</button>
              {:else}<i></i>{/if}
            {/each}
            <button class="scheme">[ColorScheme]</button><i></i>
            <button aria-label="Show">{@render toolIcon('eye')}</button>
            <button class="panel" aria-label="Side panel"><svg width="22" height="18" viewBox="0 0 22 18" fill="none" stroke="#666" stroke-width="1.400"><rect x=".8" y=".8" width="20.400" height="16.400" /><path d="M7 1v16M11 5h6M11 9h6M11 13h6" /></svg></button>
          </div>
          <div class="canvas">
            <svg viewBox="441 132 1072 706" role="img" aria-label="Board view">
              <g transform="translate(455 325) scale(.33333)">
                <g fill="#006b36" stroke="#8fc0a6" stroke-width="2" fill-rule="evenodd"><path d={boardLeft} /><path d={boardRight} /></g>
                <g shape-rendering="crispEdges">
                  <path d={P.y} fill="#ffd83b" /><path d={P.g} fill="#808080" /><path d={P.t} fill="#008080" />
                  <path d={P.w} fill="none" stroke="#dcdcdc" stroke-width="3" />
                  <path d={P.sy} stroke="#ffd83b" stroke-width="3" /><path d={P.sg} stroke="#808080" stroke-width="3" /><path d={P.st} stroke="#008080" stroke-width="3" />
                </g>
                {#each padsUsb as [x, y]}<rect x={x + 1560} {y} width="26" height="40" rx="9" fill="#ffd83b" />{/each}
                <rect x="1865" y="108" width="24" height="42" rx="9" fill="#008080" />
                <circle cx="1606" cy="898" r="26" fill="#fff" stroke="#ffd83b" stroke-width="6" />
                <g fill="#ffd83b"><rect x="110" y="682" width="35" height="24" transform="rotate(38 128 694)" /></g>
                <g fill="#008080"><rect x="1418" y="874" width="20" height="75" transform="rotate(-32 1428 911)" /><rect x="1427" y="866" width="26" height="25" transform="rotate(-32 1440 878)" /></g>
                <path d={P.wall} fill="none" stroke="#e2e2e2" stroke-width="10" stroke-linejoin="round" />
                <path d={P.b} fill="#0000ff" />
              </g>
              <circle cx="1101.500" cy="284.500" r="2.400" fill="#0000e6" />
              {#each watermarks as [x, y]}
                <text {x} {y} transform="rotate(-45 {x} {y})" text-anchor="middle" dominant-baseline="central">XZZ@XZZHK</text>
              {/each}
            </svg>
          </div>
        </div>
        <div class="edge">
          <svg width="10" height="112" viewBox="0 0 10 112"><path d="M10 .5L1 13v86l9 12.500z" fill="#d6eaff" /><path d="M10 .5L1 13v86l9 12.500" fill="none" stroke="#a3d2fb" /><path d="M6.500 53L4 56l2.500 3" fill="none" stroke="#4aa5ee" stroke-width="1.200" /></svg>
        </div>
      </div>
    </section>
  </main>

  <footer>XZZ Schematics https://www.xzz.hk</footer>
</div>

<style>
  .app { display: flex; flex-direction: column; height: 100vh; overflow: hidden; background: #fff; color: #000; font: 15px/20px "Open Sans", "Noto Sans", sans-serif; }
  .app :global(*) { box-sizing: border-box; }
  button { padding: 0; border: 0; background: none; font: inherit; color: inherit; white-space: nowrap; }
  svg { display: block; flex: none; }
  .title { flex: none; display: flex; align-items: center; gap: 10px; height: 40px; padding: 0 17px 0 10px; background: linear-gradient(90deg, #20a4fb 0, #2f78fd 15%, #3073fe 30%, #2f86fd 55%, #2d97fe 80%, #2a9cfd 100%); color: #fff; }
  h1 { margin: 0; font: 400 14px/20px "Noto Sans", sans-serif; }
  .winbtns { display: flex; align-items: center; gap: 14px; margin-left: auto; }
  .winbtns i { width: 1px; height: 20px; margin: 0 -2px 0 -3px; background: #7fbdff; }
  .menu { flex: none; display: flex; align-items: center; gap: 16px; height: 32px; padding: 0 18px; background: #efefef; border-bottom: 1px solid #d9d9d9; }
  main { flex: 1; display: flex; min-height: 0; }
  .left { flex: none; display: flex; flex-direction: column; width: 431px; border-right: 1px solid #d9d9d9; }
  .search { flex: none; display: flex; align-items: center; height: 40px; padding: 0 5px; border-bottom: 1px solid #d9d9d9; }
  .shrink { width: 49px; height: 30px; border: 1px solid #dcdcdc; border-radius: 3px; background: #fff; }
  .combo { flex: 1; display: flex; align-items: center; gap: 8px; height: 30px; margin: 0 11px 0 10px; padding-right: 3px; border: 1px solid #dcdcdc; border-radius: 3px; }
  select { flex: 1; min-width: 0; height: 28px; padding: 0 0 0 8px; border: 0; appearance: none; background: none; color: #000; font: inherit; }
  .go { display: grid; place-items: center; width: 49px; height: 30px; border-radius: 3px; background: #4a90ff; }
  .browse { flex: 1; display: flex; min-height: 0; }
  .rail { flex: none; width: 74px; padding: 0 0 0 9px; color: #5f6880; }
  .rail button { display: flex; flex-direction: column; align-items: center; gap: 3px; width: 100%; height: 70px; padding-top: 12px; font-size: 14px; }
  fieldset { width: 56px; min-width: 0; margin: 0 0 27px; padding: 0 0 2px; border: 2px dashed #5f6880; border-radius: 7px; }
  legend { margin: 0 auto; padding: 0; font-size: 14px; }
  .vip { border-color: #2f97f8; }
  .vip legend, .on span { color: #3d9bf8; }
  .rail .fav { width: 56px; margin-top: -16px; }
  .treewrap { flex: 1; min-width: 0; overflow: hidden; background: linear-gradient(90deg, #d6dff0 0, #e9edf6 12px, #f8f8f8 30px); }
  ul { margin: -14px 0 0; padding: 0; list-style: none; overflow: hidden; }
  li { display: flex; align-items: center; height: 24px; padding-left: 61px; white-space: nowrap; }
  .ic { flex: none; display: flex; align-items: center; width: 20px; }
  .d1 { padding-left: 81px; }
  .d2 { padding-left: 101px; }
  .pdf .ic, .pcb .ic { padding-left: 2px; }
  .active { color: #4a90ff; }
  .inbar { flex: none; width: 12px; padding-left: 1px; background: #f8f8f8; }
  .inbar i { display: block; width: 10px; height: 292px; border-radius: 0 0 5px 5px; background: #636363; }
  .outbar { flex: none; display: flex; flex-direction: column; align-items: center; width: 12px; padding-top: 6px; background: #efefef; }
  .outbar i { width: 10px; height: 49px; margin-top: 316px; border-radius: 5px; background: #636363; }
  .split { flex: none; width: 9px; padding-top: 337px; background: #fbfffb; }
  .right { flex: 1; display: flex; flex-direction: column; min-width: 0; border-left: 1px solid #d9d9d9; }
  .tabs { flex: none; display: flex; align-items: center; gap: 5px; height: 34px; padding: 0 11px 0 8px; border-bottom: 1px solid #d9d9d9; background: #fafafa; }
  .tab { display: flex; align-items: center; gap: 4px; height: 24px; padding: 0 5px; border: 1px solid #777; border-radius: 3px; color: #888; font: 14px/20px "Noto Sans", sans-serif; }
  .cur { padding: 0 12px; border-color: #000; color: #000; font-weight: 700; }
  .closeall { margin-left: auto; }
  .work { flex: 1; display: flex; min-height: 0; }
  .viewer { flex: 1; display: flex; flex-direction: column; min-width: 0; border-right: 1px solid #d9d9d9; }
  .tools { flex: none; display: flex; align-items: center; gap: 2px; height: 26px; padding: 0 6px 0 5px; background: #fafafa; }
  .tools button { display: grid; place-items: center; width: 24px; height: 24px; }
  .tools .on { background: #b9d4fb; }
  .tools i { flex: none; width: 1px; height: 20px; margin: 0 1px; background: #d0d0d0; }
  .tools .scheme { width: 109px; height: 22px; border: 1px solid #f00; font: 14px/20px "Noto Sans", sans-serif; }
  .tools .panel { margin-left: auto; }
  .canvas { flex: 1; min-height: 0; }
  .canvas svg { width: 100%; height: 100%; }
  .canvas text { font-size: 17px; fill: #bfbdb5; mix-blend-mode: multiply; }
  .edge { flex: none; width: 9px; padding-top: 325px; background: #fafafa; }
  footer { flex: none; height: 20px; background: #0590da; color: #fff; text-align: center; font: 15px/20px "Liberation Mono", monospace; }
</style>
